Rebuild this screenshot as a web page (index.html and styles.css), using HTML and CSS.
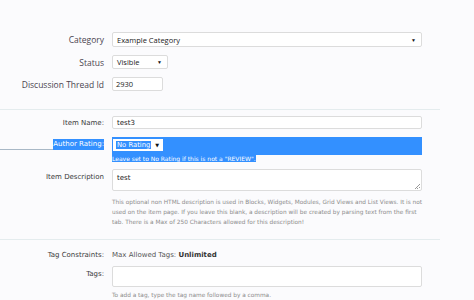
FILE: index.html
```html
<!DOCTYPE html>
<html lang="en">
<head>
    <meta charset="UTF-8">
    <title>Edit Item</title>
    <link rel="stylesheet" href="styles.css">
</head>
<body>
    <div class="page">
        <!-- Basic settings -->
        <section class="block block-top">
            <div class="row">
                <label class="label">Category</label>
                <div class="select select-wide">Example Category<span class="caret">&#9660;</span></div>
            </div>
            <div class="row">
                <label class="label">Status</label>
                <div class="select select-short">Visible<span class="caret">&#9660;</span></div>
            </div>
            <div class="row">
                <label class="label">Discussion Thread Id</label>
                <div class="input input-short">2930</div>
            </div>
        </section>

        <hr class="sep">

        <!-- Item details -->
        <section class="block block-item">
            <div class="row">
                <label class="label">Item Name:</label>
                <div class="input input-wide">test3</div>
            </div>
            <div class="row row-rating">
                <label class="label label-rating"><span class="rule"></span><span class="hl">Author Rating:</span></label>
                <div class="rating">
                    <div class="rating-box">
                        <div class="select select-rating"><span class="hl-text">No Rating</span><span class="caret">&#9660;</span></div>
                    </div>
                    <p class="rating-hint"><span class="hl">Leave set to No Rating if this is not a "REVIEW".</span></p>
                </div>
            </div>
            <div class="row row-top">
                <label class="label">Item Description</label>
                <div class="field">
                    <div class="textarea">test<span class="grip"></span></div>
                    <p class="help">This optional non HTML description is used in Blocks, Widgets, Modules, Grid Views and List Views. It is not used on the item page. If you leave this blank, a description will be created by parsing text from the first tab. There is a Max of 250 Characters allowed for this description!</p>
                </div>
            </div>
        </section>

        <hr class="sep sep-tags">

        <!-- Tags -->
        <section class="block block-tags">
            <div class="row">
                <label class="label">Tag Constraints:</label>
                <div class="plain">Max Allowed Tags: <strong>Unlimited</strong></div>
            </div>
            <div class="row row-top">
                <label class="label label-tags">Tags:</label>
                <div class="field">
                    <div class="input input-tags"></div>
                    <p class="hint">To add a tag, type the tag name followed by a comma.</p>
                </div>
            </div>
        </section>
    </div>
</body>
</html>
```

FILE: styles.css
```css
* {
    margin: 0;
    padding: 0;
    box-sizing: border-box;
}

body {
    background: #fbfbfd;
    color: #333;
    font-family: 'Open Sans', sans-serif;
    overflow: hidden;
}

.page {
    width: 474px;
    padding-top: 32px;
}

.block {
    display: flex;
    flex-direction: column;
}

.row {
    display: grid;
    grid-template-columns: 104px 310px;
    column-gap: 8px;
    align-items: center;
}

.row-top {
    align-items: start;
}

.label {
    text-align: right;
    color: #444;
}

/* Top block */
.block-top {
    gap: 8px;
    font-size: 8.5px;
}

.block-top .label {
    color: #4a4450;
}

.select,
.input,
.textarea {
    background: #fff;
    border: 1px solid #dcdcdc;
    border-radius: 2px;
    color: #222;
    display: flex;
    align-items: center;
    padding: 0 4px;
    font-size: 7.5px;
}

.caret {
    margin-left: auto;
    font-size: 5px;
    color: #111;
    padding-right: 1px;
}

.select-wide {
    height: 15px;
    width: 310px;
}

.select-short {
    height: 14px;
    width: 56px;
}

.input-short {
    height: 14px;
    width: 51px;
    padding: 0 3px;
}

.sep {
    border: 0;
    border-top: 1px solid #e4ecee;
    width: 440px;
    margin: 18px 0 6px;
}

/* Item block */
.block-item,
.block-tags {
    font-family: 'DejaVu Sans', Verdana, sans-serif;
    font-size: 7px;
}

.block-item .label,
.block-tags .label {
    color: #3a3a3a;
}

.input-wide {
    height: 13px;
    width: 310px;
    font-size: 7px;
}

.row-rating {
    margin-top: 8px;
    align-items: start;
}

.label-rating {
    display: flex;
    align-items: center;
    padding-top: 2px;
}

.rule {
    flex: 1;
    height: 1px;
    background: #a8b8c6;
    margin-top: 9px;
}

.hl {
    background: #3390ff;
    color: #fff;
    padding: 1px 0 2px;
}

.rating-box {
    background: #3390ff;
    height: 18px;
    padding: 2px 1px;
}

.select-rating {
    width: 50px;
    height: 12px;
    border-color: #fff;
    border-radius: 0;
    padding: 0 2px;
    font-size: 6.8px;
}

.hl-text {
    background: #3390ff;
    color: #fff;
    padding: 0 1px;
}

.rating-hint {
    font-size: 6px;
    line-height: 7px;
}

.rating-hint .hl {
    padding: 0;
}

.row-top {
    margin-top: 7px;
}

.row-top .label {
    padding-top: 4px;
}

.textarea {
    position: relative;
    height: 22px;
    width: 310px;
    align-items: flex-start;
    padding: 4px 4px;
    font-size: 7px;
}

.grip {
    position: absolute;
    right: 1px;
    bottom: 1px;
    width: 5px;
    height: 5px;
    background: linear-gradient(135deg, transparent 45%, #999 45%, #999 55%, transparent 55%, transparent 70%, #999 70%, #999 80%, transparent 80%);
}

.help {
    margin-top: 6px;
    width: 312px;
    color: #8c8c8c;
    font-size: 5.8px;
    line-height: 10px;
}

.sep-tags {
    margin: 12px 0 8px;
}

/* Tags block */
.block-tags .row:first-child {
    height: 10px;
    margin-top: 2px;
}

.plain {
    color: #555;
    font-size: 7px;
}

.plain strong {
    color: #333;
}

.input-tags {
    height: 21px;
    width: 310px;
}

.label-tags {
    padding-top: 5px;
}

.block-tags .row-top {
    margin-top: 6px;
}

.hint {
    margin-top: 4px;
    color: #8c8c8c;
    font-size: 5.8px;
    line-height: 8px;
}
```
